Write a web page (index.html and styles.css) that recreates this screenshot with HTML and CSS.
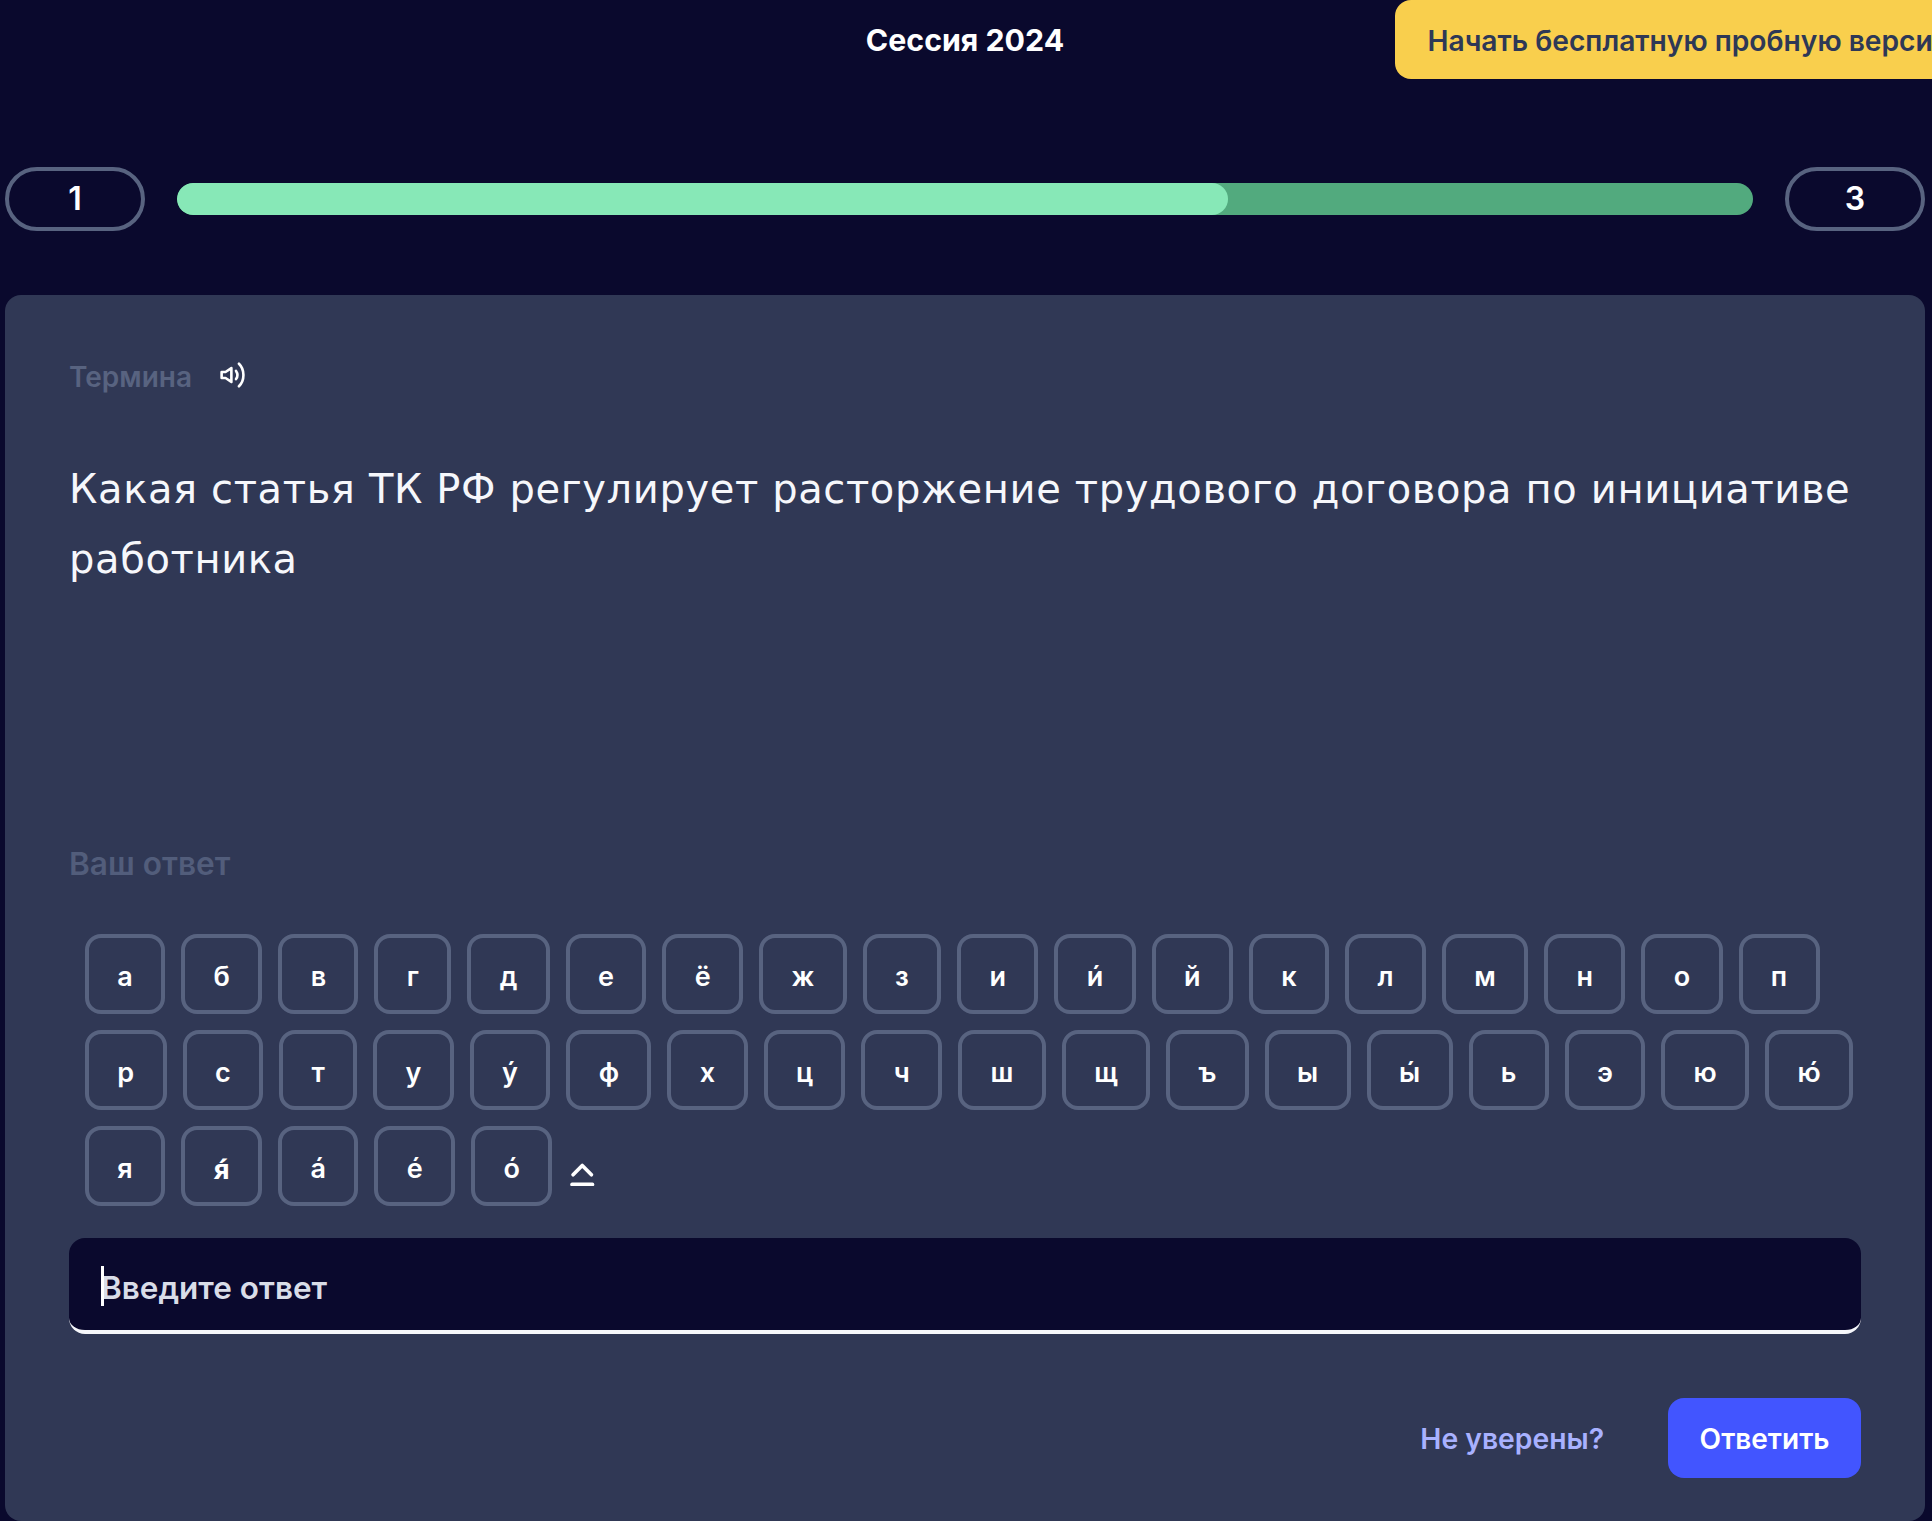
FILE: index.html
```html
<!DOCTYPE html>
<html lang="ru">
<head>
<meta charset="utf-8">
<title>Сессия 2024</title>
<link rel="stylesheet" href="styles.css">
</head>
<body>
<div class="page">
  <header class="header">
    <div></div>
    <h1 class="title">Сессия 2024</h1>
    <a class="trial">Начать бесплатную пробную версию</a>
  </header>
  <div class="progress">
    <div class="count">1</div>
    <div class="track"><div class="fill"></div></div>
    <div class="count">3</div>
  </div>
  <main class="card">
    <div class="term">
      <span class="label">Термина</span>
      <svg class="speaker" viewBox="0 0 24 24" fill="none" stroke="#fff" stroke-width="2.4" stroke-linecap="round" stroke-linejoin="round"><path d="M1.5 9.2v5.6h3.6l5.4 3.6V5.6L5.1 9.2z"/><path d="M14.8 8.2c1.6 2.3 1.6 5.3 0 7.6" /><path d="M17.5 1.6c5.5 5.4 5.5 15.4 0 20.8"/></svg>
    </div>
    <p class="question">Какая статья ТК РФ регулирует расторжение трудового договора по инициативе работника</p>
    <div class="answer-label">Ваш ответ</div>
    <div class="keyboard">
      <div class="keys">
        <button class="key">а</button><button class="key">б</button><button class="key">в</button><button class="key">г</button><button class="key">д</button><button class="key">е</button><button class="key">ё</button><button class="key">ж</button><button class="key">з</button><button class="key">и</button><button class="key">и́</button><button class="key">й</button><button class="key">к</button><button class="key">л</button><button class="key">м</button><button class="key">н</button><button class="key">о</button><button class="key">п</button>
      </div>
      <div class="keys">
        <button class="key">р</button><button class="key">с</button><button class="key">т</button><button class="key">у</button><button class="key">у́</button><button class="key">ф</button><button class="key">х</button><button class="key">ц</button><button class="key">ч</button><button class="key">ш</button><button class="key">щ</button><button class="key">ъ</button><button class="key">ы</button><button class="key">ы́</button><button class="key">ь</button><button class="key">э</button><button class="key">ю</button><button class="key">ю́</button>
      </div>
      <div class="keys">
        <button class="key">я</button><button class="key key-mark">я́</button><button class="key">а́</button><button class="key">е́</button><button class="key">о́</button>
        <svg class="shift" viewBox="0 0 24 24" fill="none" stroke="#fff" stroke-width="3.6" stroke-linecap="round" stroke-linejoin="round"><path d="M3 12.5 12 3.5l9 9"/><path d="M2 22h20"/></svg>
      </div>
    </div>
    <div class="input"><span class="caret"></span><span class="placeholder">Введите ответ</span></div>
    <div class="actions">
      <a class="unsure">Не уверены?</a>
      <button class="submit">Ответить</button>
    </div>
  </main>
</div>
</body>
</html>
```
FILE: styles.css
```css
* { box-sizing: border-box; }
html, body { margin: 0; height: 100%; }
body {
  background: #0a092d;
  color: #fff;
  font-family: Inter, "Noto Sans", sans-serif;
  overflow: hidden;
}
.page { padding: 0 7px 0 5px; height: 1521px; }
.header {
  display: grid;
  grid-template-columns: 1fr auto 1fr;
  align-items: start;
  height: 79px;
}
.title {
  margin: 0;
  font-size: 30.3px;
  font-weight: 700;
  height: 79px;
  display: flex;
  align-items: center;
}
.trial {
  justify-self: end;
  margin-right: -64px;
  height: 79px;
  padding: 3px 32px 0;
  border-radius: 16px;
  background: #f9cf4d;
  color: #2e3856;
  font-size: 28.2px;
  font-weight: 600;
  white-space: nowrap;
  display: flex;
  align-items: center;
}
.progress {
  display: flex;
  align-items: center;
  gap: 32px;
  margin-top: 88px;
  height: 64px;
}
.count {
  flex: none;
  width: 140px;
  height: 64px;
  padding-bottom: 2px;
  border: 4px solid #586380;
  border-radius: 32px;
  display: flex;
  align-items: center;
  justify-content: center;
  font-size: 32px;
  font-weight: 600;
}
.track {
  flex: 1;
  height: 32px;
  border-radius: 16px;
  background: #52aa7e;
  overflow: hidden;
}
.fill {
  width: 66.66%;
  height: 100%;
  border-radius: 16px;
  background: #87e8b7;
}
.card {
  margin-top: 64px;
  height: 1226px;
  padding: 64px 64px 0;
  background: #303855;
  border-radius: 16px;
}
.term {
  display: flex;
  align-items: center;
  gap: 28px;
  height: 36px;
}
.label {
  color: #586380;
  font-size: 28px;
  font-weight: 600;
  line-height: 36px;
}
.speaker { width: 26px; height: 26px; margin-top: -4px; }
.question {
  margin: 59px 0 0;
  height: 392px;
  font-family: "DejaVu Sans", sans-serif;
  font-size: 40px;
  line-height: 70px;
  letter-spacing: 0.62px;
  color: #f6f7fb;
}
.answer-label {
  color: #525d7b;
  font-size: 31.6px;
  font-weight: 600;
  line-height: 36px;
}
.keyboard {
  margin-top: 52px;
  padding-left: 16px;
  display: flex;
  flex-direction: column;
  gap: 16px;
}
.keys {
  display: flex;
  align-items: center;
  gap: 16px;
  height: 80px;
}
.key {
  height: 80px;
  padding: 4px 28.36px 0;
  border: 4px solid #586380;
  border-radius: 16px;
  background: transparent;
  color: #fff;
  font-family: Inter, sans-serif;
  font-size: 27px;
  font-weight: 600;
}
.key-mark { font-family: "Noto Sans", sans-serif; font-weight: 700; }
.shift { width: 24.5px; height: 24.5px; margin: 16px 0 0 2px; }
.input {
  position: relative;
  margin-top: 32px;
  height: 96px;
  padding: 6px 32px 0;
  background: #0a092d;
  border-bottom: 4px solid #f6f7fb;
  border-radius: 16px;
  display: flex;
  align-items: center;
}
.placeholder { color: #d9dde8; font-size: 31.5px; font-weight: 600; }
.caret {
  position: absolute;
  left: 32px;
  top: 28px;
  width: 3px;
  height: 40px;
  background: #fff;
}
.actions {
  margin-top: 64px;
  display: flex;
  justify-content: flex-end;
  align-items: center;
  gap: 64px;
}
.unsure { color: #a8b1ff; font-size: 28.3px; font-weight: 600; padding-top: 2px; }
.submit {
  height: 80px;
  padding: 2px 31.5px 0;
  border: 0;
  border-radius: 16px;
  background: #4255ff;
  color: #fff;
  font-family: Inter, sans-serif;
  font-size: 28px;
  font-weight: 600;
}
```
